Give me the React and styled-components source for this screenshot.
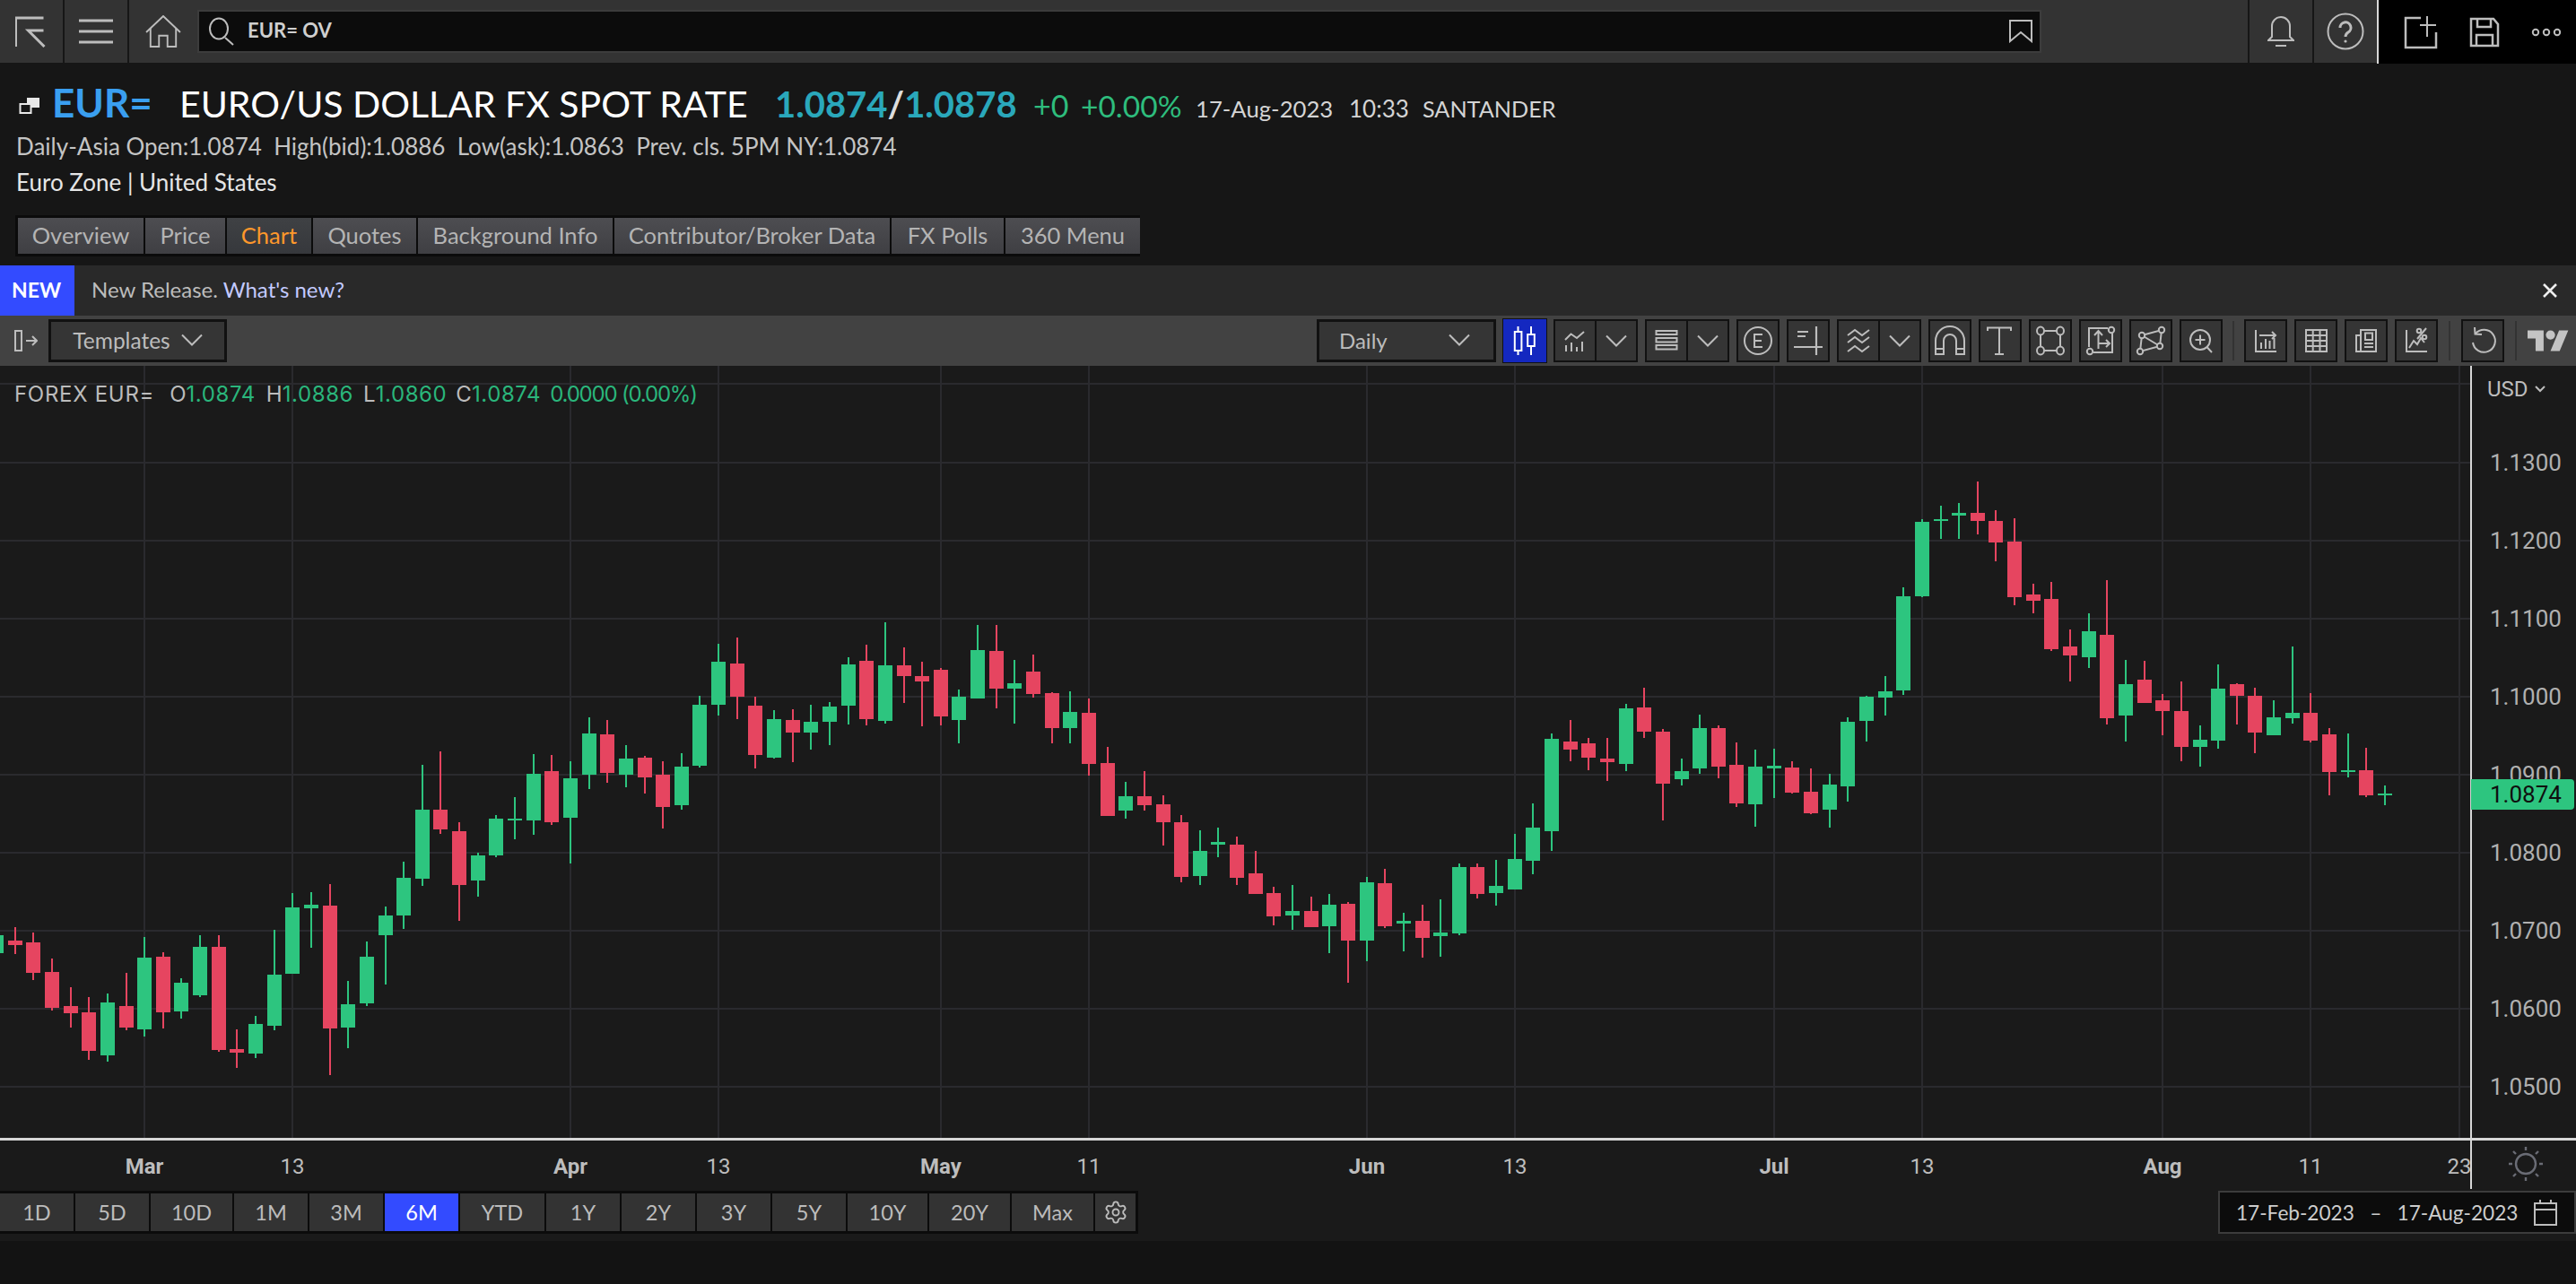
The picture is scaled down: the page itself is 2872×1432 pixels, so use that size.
import React from "react";
import styled, { createGlobalStyle } from "styled-components";
import { Settings } from "lucide-react";

const UI = `"Lato", "Open Sans", "Liberation Sans", sans-serif`;
const AXIS = `"Roboto", "Inter", "Liberation Sans", sans-serif`;

const Global = createGlobalStyle`
  html, body { margin: 0; padding: 0; background: #131313; width: 2872px; height: 1432px; overflow: hidden; }
  * { box-sizing: border-box; }
`;

const Page = styled.div`
  width: 2872px; height: 1432px; display: flex; flex-direction: column; overflow: hidden;
  background: #161616; font-family: ${UI}; color: #c8c8c8;
`;

/* ---------- top bar ---------- */
const TopBar = styled.header`
  height: 71px; flex: none; display: flex; background: #161616;
`;
const TopLeft = styled.div`
  flex: 1; display: flex; height: 70px; background: #333;
`;
const NavCell = styled.div`
  width: ${p => p.$w}px; height: 70px; flex: none; display: flex; align-items: center; justify-content: center;
  ${p => p.$divider === "right" ? "border-right: 2px solid #161616;" : ""}
  ${p => p.$divider === "left" ? "border-left: 2px solid #161616;" : ""}
`;
const SearchBox = styled.div`
  width: 2056px; height: 48px; margin-top: 11px; display: flex; align-items: center; flex: none;
  background: #0c0c0c; border: 2px solid #3c3c3c; padding: 0 8px 0 10px;
`;
const SearchText = styled.span`
  font-size: 22px; font-weight: 700; color: #cfcfcf; margin-left: 14px; flex: 1; padding-bottom: 3px;
`;
const Push = styled.div` flex: 1; `;
const BlackTools = styled.div`
  width: 222px; height: 71px; flex: none; background: #000; border-left: 2px solid #d8d8d8;
  display: flex; align-items: center; padding-left: 28px; gap: 35px;
`;

/* ---------- instrument header ---------- */
const Header = styled.section`
  flex: none; height: 225px; padding: 17px 18px 0; background: #161616;
`;
const TitleRow = styled.div`
  height: 50px; display: flex; align-items: baseline; white-space: nowrap; position: relative; padding-left: 40px;
`;
const StackIcon = styled.svg`
  position: absolute; left: 3px; top: 20px;
`;
const Ric = styled.span`
  font-size: 44px; font-weight: 700; color: #3a9ff0; width: 142px; flex: none;
`;
const TitleName = styled.span`
  font-size: 41px; color: #fff; width: 664px; flex: none;
`;
const Quote = styled.span`
  font-size: 40px; font-weight: 700; color: #2aa8bb; width: 288px; flex: none;
`;
const Slash = styled.span` color: #ddd; `;
const Change = styled.span`
  font-size: ${p => p.$size}px; color: #2ebd7d; width: ${p => p.$w}px; flex: none;
`;
const Stamp = styled.span`
  font-size: ${p => p.$size}px; color: #d4d4d4; width: ${p => p.$w}px; flex: none;
`;
const MetaRow = styled.div`
  height: 30px; margin-top: 10px; font-size: 26px; line-height: 30px; color: ${p => p.$bright ? "#e6e6e6" : "#c4c4c4"}; white-space: pre;
`;
const Tabs = styled.nav`
  display: flex; width: fit-content; margin: 22px 0 0 -1px; height: 46px; padding: 3px 0 3px 3px; background: #0b0b0b; gap: 2px;
`;
const Tab = styled.div`
  width: ${p => p.$w}px; display: flex; align-items: center; justify-content: center; padding-bottom: 2px;
  font-size: 25.5px; white-space: nowrap;
  color: ${p => p.$active ? "#ff982b" : "#b4b4b4"};
  background: ${p => p.$active ? "linear-gradient(#3f4144,#36383c)" : "linear-gradient(#4d4d51,#3f3f43)"};
`;

/* ---------- release bar ---------- */
const ReleaseBar = styled.div`
  flex: none; height: 56px; display: flex; align-items: center; background: #292929; font-size: 24px;
`;
const NewBadge = styled.div`
  width: 83px; height: 100%; flex: none; display: flex; align-items: center; justify-content: center;
  background: #334bff; color: #fff; font-weight: 700; font-size: 23px; padding: 0 2px 2px 0;
`;
const ReleaseText = styled.span` margin-left: 19px; color: #bcbcbc; padding-bottom: 3px; `;
const ReleaseLink = styled.span` color: #c3caff; `;
const CloseSlot = styled.div` margin-right: 20px; display: flex; `;

/* ---------- chart toolbar ---------- */
const Toolbar = styled.div`
  flex: none; height: 56px; display: flex; align-items: center; background: #424242; padding: 0 8px 0 16px;
`;
const TemplatesBtn = styled.div`
  width: 199px; height: 48px; margin-left: 12px; display: flex; align-items: center; justify-content: center; gap: 12px;
  background: #353535; border: 3px solid #111; font-size: 24.5px; color: #bcbcbc; padding-bottom: 2px;
`;
const ToolGroup = styled.div`
  margin-left: auto; display: flex; align-items: center; gap: 8px;
`;
const IntervalBtn = styled.div`
  width: 200px; height: 48px; display: flex; align-items: center; justify-content: space-between; padding: 0 26px 2px 22px;
  background: #353535; border: 3px solid #111; font-size: 24px; color: #bcbcbc;
`;
const ToolBtn = styled.div`
  width: 48px; height: 48px; flex: none; display: flex; align-items: center; justify-content: center;
  background: ${p => p.$active ? "#1428c0" : "#353535"}; border: 2px solid ${p => p.$active ? "#1428c0" : "#111"};
  ${p => p.$active ? "box-shadow: 0 0 0 1px #111;" : ""}
`;
const SplitBtn = styled.div`
  width: 94px; height: 48px; flex: none; display: flex; background: #353535; border: 2px solid #111;
`;
const SplitCell = styled.div`
  flex: 1; display: flex; align-items: center; justify-content: center;
  ${p => p.$first ? "border-right: 2px solid #111;" : ""}
`;
const ToolSep = styled.div`
  width: 2px; height: 44px; background: #333; margin: 0 ${p => p.$m}px;
`;

/* ---------- chart ---------- */
const ChartPanel = styled.main`
  flex: none; height: 976px; background: #1a1a1a; position: relative; display: flex; flex-direction: column;
`;
const ChartSvg = styled.svg`
  display: block; flex: none;
`;
const Legend = styled.div`
  position: absolute; left: 16px; top: 18px; display: flex; font-family: "Inter", ${AXIS}; font-size: 24px; line-height: 28px; color: #bcbcbc; white-space: pre;
`;
const LegendName = styled.span` letter-spacing: 0.7px; `;
const LegendItem = styled.span` margin-left: ${p => p.$gap || 0}px; `;
const Up = styled.span` color: #2ab67c; letter-spacing: ${p => p.$track || 0}px; `;
const AxisLabel = styled.text`
  font-family: ${AXIS}; font-size: 24px; fill: #bdbdbd; font-weight: ${p => p.$bold ? 700 : 400};
  text-anchor: ${p => p.$anchor || "middle"};
`;
const TagLabel = styled.text`
  font-family: ${AXIS}; font-size: 26px; fill: #0f0f0f;
`;
const PriceLabel = styled.text`
  font-family: ${AXIS}; font-size: 26px; fill: #b0b0b0;
`;

const RangeRow = styled.div`
  flex: 1; display: flex; justify-content: space-between; align-items: flex-start; padding-top: 2px;
`;
const RangeBar = styled.div`
  display: flex; height: 48px; padding: 3px 3px 3px 0; gap: 2px; background: #0b0b0b;
`;
const RangeBtn = styled.div`
  width: ${p => p.$w}px; display: flex; align-items: center; justify-content: center; font-size: 23.5px; padding-bottom: 1px;
  color: ${p => p.$active ? "#fff" : "#bcbcbc"}; background: ${p => p.$active ? "#334bff" : "#333"};
`;
const DateBox = styled.div`
  width: 399px; height: 48px; display: flex; align-items: center; padding-left: 18px; font-size: 22.6px; white-space: pre;
  background: #0c0c0c; border: 2px solid #3c3c3c; color: #cdcdcd; gap: 18px;
`;
const Footer = styled.div` flex: 1; background: #131313; `;

/* ---------- icons ---------- */
const S = "#bdbdbd";
const Ic = ({ w = 44, h = 44, vb, sw = 2, c = S, children }) => (
  <svg width={w} height={h} viewBox={vb || `0 0 ${w} ${h}`} fill="none" stroke={c} strokeWidth={sw}>{children}</svg>
);
const Chevron = ({ w = 24, c = S }) => (
  <svg width={w} height={14} viewBox="0 0 24 14" fill="none" stroke={c} strokeWidth="2"><path d="M1 1.5 L12 12.5 L23 1.5" /></svg>
);

const LogoMark = () => <Ic w={36} h={36} vb="1.5 0 36 36" sw={3}><path d="M2 35 V3 H33" /><path d="M33 17 H16 L34 35" /></Ic>;
const MenuIcon = () => <Ic w={40} h={30} sw={3}><path d="M1 3H39M1 15H39M1 27H39" /></Ic>;
const HomeIcon = () => <Ic w={40} h={36} vb="0 0 42 38" sw={2}><path d="M1 20 L21 1 L41 20" /><path d="M6 15 V37 H16 V24 H26 V37 H36 V15" /></Ic>;
const SearchIcon = () => <Ic w={30} h={32} sw={2}><ellipse cx="12" cy="13" rx="10" ry="11.5" /><path d="M19 23 L28 31" /></Ic>;
const BookmarkIcon = () => <Ic w={26} h={26}><path d="M1 1 H25 V24 L13 14 L1 24 Z" /></Ic>;
const BellIcon = () => <Ic w={30} h={34}><path d="M5 23 V11 a10 10 0 0 1 20 0 V23 L29 27 H1 Z" /><path d="M9 33 H21" /></Ic>;
const HelpIcon = () => (
  <Ic w={42} h={42} sw={2}>
    <circle cx="21" cy="21" r="19.5" />
    <path d="M15 17 a6 6 0 1 1 9 5 q-3 2 -3 5" strokeWidth="3" />
    <circle cx="21" cy="32" r="1.6" fill={S} stroke="none" />
  </Ic>
);
const NewPageIcon = () => <Ic w={38} h={38} sw={2.5}><path d="M19 3 H2 V36 H36 V19" /><path d="M26 1 V24 M18 11 H36" strokeWidth="2" /></Ic>;
const SaveIcon = () => <Ic w={34} h={34} sw={2.5}><path d="M2 2 H27 L32 8 V32 H2 Z" /><path d="M9 2 V11 H24 V2" /><path d="M8 32 V20 H26 V32" /></Ic>;
const DotsIcon = () => (
  <Ic w={34} h={12} sw={2}><circle cx="5" cy="6" r="3.2" /><circle cx="17" cy="6" r="3.2" /><circle cx="29" cy="6" r="3.2" /></Ic>
);
const PanelIcon = () => <Ic w={26} h={24} sw={2}><rect x="1" y="1" width="7" height="22" /><path d="M13 12 H25 M20 7 L25 12 L20 17" /></Ic>;
const CloseIcon = () => <Ic w={18} h={18} sw={2.6} c="#eee"><path d="M2 2 L16 16 M16 2 L2 16" /></Ic>;

const T = ({ children, c, sw }) => <Ic w={44} h={44} vb="2 2 44 44" c={c} sw={sw}>{children}</Ic>;
const CandleIcon = () => (
  <T c="#fff"><path d="M16.5 8 V40 M31 8 V40" /><rect x="12.8" y="14" width="7.6" height="21" fill="#1428c0" /><rect x="27.2" y="17" width="7.6" height="13" fill="#1428c0" /></T>
);
const StudyIcon = () => (
  <T><path d="M14 36V29M20 36V26M26 36V31M32 36V25" /><path d="M13 23 L19.5 16.5 L26 21 L34 14" /></T>
);
const LayersIcon = () => (
  <T><rect x="12.5" y="13" width="23" height="4" /><rect x="12.5" y="21" width="23" height="4.5" /><rect x="12.5" y="29" width="23" height="4.5" /></T>
);
const EventIcon = () => (
  <T><circle cx="24" cy="24" r="15" /><path d="M29 17 H20 V31 H29 M20 24 H28" /></T>
);
const LineToolIcon = () => (
  <T sw={2.2}><path d="M33 8 V40 M8 31 H40 M12 14 H24 M12 19 H21" /></T>
);
const WavesIcon = () => (
  <T><path d="M12 18 L20 12 L28 18 L36 12 M12 26 L20 20 L28 26 L36 20 M12 36 L20 30 L28 36 L36 30" /></T>
);
const MagnetIcon = () => (
  <T><path d="M8 39 V24 a16 16 0 0 1 32 0 V39 H31 V24 a7 7 0 0 0 -14 0 V39 Z M8 33 H17 M31 33 H40" /></T>
);
const TextToolIcon = () => (
  <T><path d="M10 13 V9.5 H36 V13 M23 9.5 V39 M18 39 H28" /></T>
);
const RectToolIcon = () => (
  <T>
    <path d="M17 13 H31 M35 17 V30 M31 35 H17 M13 30 V17" />
    <ellipse cx="13" cy="13" rx="4" ry="4.5" /><ellipse cx="35" cy="13" rx="4" ry="4.5" /><ellipse cx="13" cy="35" rx="4" ry="4.5" /><ellipse cx="35" cy="35" rx="4" ry="4.5" />
  </T>
);
const TransformIcon = () => (
  <T>
    <path d="M32 10 H11 V31 M16 37 H37 V16" />
    <circle cx="36" cy="12" r="3.2" fill="#353535" /><circle cx="12" cy="36" r="3.2" fill="#353535" />
    <path d="M21.5 33 V13 M17 18 L21.5 13 L26 18 M21.5 27 H34 M30 23 L34 27 L30 31" />
  </T>
);
const PolyIcon = () => (
  <T>
    <path d="M14 18 L36 12 L34 30 L12 36 Z M14 18 L34 30" />
    <circle cx="14" cy="18" r="3.2" fill="#353535" /><circle cx="36" cy="12" r="3.2" fill="#353535" />
    <circle cx="34" cy="30" r="3.2" fill="#353535" /><circle cx="12" cy="36" r="3.2" fill="#353535" />
  </T>
);
const ZoomIcon = () => (
  <T><circle cx="23" cy="23" r="11" /><path d="M23 17.5 V28.5 M17.5 23 H28.5 M30.5 31 L36 37" /></T>
);
const ChartCompareIcon = () => (
  <T><path d="M13 12 V36 H36 M19 33 V26 M24 33 V22 M28.5 33 V24 M33.5 33 V21 M17 18 H35 M31 14 L35 18 L31 22" /></T>
);
const TableIcon = () => (
  <T><rect x="13" y="12" width="23" height="24" /><path d="M13 18 H36 M13 24 H36 M13 30 H36 M20.7 12 V36 M28.5 12 V36" /></T>
);
const NewsIcon = () => (
  <T><path d="M18 12 H35 V36 H18 Z M18 18 H13 V36 H18" /><rect x="23" y="15.5" width="8" height="7.5" /><path d="M22 27 H32 M22 31 H32" /></T>
);
const PercentIcon = () => (
  <T>
    <path d="M13 12 V36 H36 M16 32 L21 24 L25 28 L29 21 L33 26" />
    <path d="M35 10 L25 22" /><circle cx="27" cy="13" r="2.3" /><circle cx="33" cy="20" r="2.3" />
  </T>
);
const UndoIcon = () => (
  <T><path d="M16 16 a12.5 12.5 0 1 1 -3 10" /><path d="M15 9 L15.5 16.5 L23 17" /></T>
);
const TvLogo = () => (
  <svg width="46" height="26" viewBox="0 3 36 20" fill="#c4c4c4">
    <path d="M14 22H7V11H0V4h14v18zM28 22h-8l7.5-18h8L28 22z" /><circle cx="20" cy="8" r="4" />
  </svg>
);
const StackGlyph = () => (
  <StackIcon width="24" height="20" viewBox="0 0 24 20">
    <rect x="9" y="1" width="14" height="11" fill="#e8e8e8" />
    <rect x="1.5" y="8" width="12" height="10" fill="#161616" stroke="#e8e8e8" strokeWidth="2" />
  </StackIcon>
);
const CalendarIcon = () => (
  <Ic w={26} h={30}><rect x="1" y="5" width="24" height="24" /><path d="M1 12 H25 M7 1 V5 M19 1 V5" /></Ic>
);

/* ---------- chart data: [x, wickTop, bodyTop, bodyBottom, wickBottom, up] ---------- */
const sets = [
  { ox: 0, oy: 640, sx: 2.24, sy: 2.613, d: [
    [-9,1030,1053,1105,1120,1],[38,1030,1069,1082,1108,0],[83,1045,1074,1163,1184,0],[130,1121,1160,1265,1273,0],[177,1205,1260,1281,1322,0],
    [222,1233,1278,1390,1416,0],[269,1223,1249,1403,1422,1],[316,1163,1260,1322,1330,0],[361,1058,1119,1328,1348,1],[408,1103,1116,1278,1325,0],
    [452,1179,1192,1275,1296,1],[499,1053,1087,1228,1233,1],[546,1053,1087,1388,1393,0],[591,1328,1385,1396,1440,0],[638,1288,1312,1398,1411,1],
    [685,1037,1168,1317,1330,1],[730,930,972,1166,1166,1],[777,928,964,975,1090,1],[824,904,967,1325,1461,0],[869,1186,1254,1322,1382,1],
    [916,1071,1116,1252,1260,1],[963,970,996,1053,1197,1],[1008,839,886,996,1035,1],[1055,557,687,889,909,1],[1100,517,687,745,758,0],
    [1147,724,750,907,1011,0],[1194,813,821,894,941,1],[1239,703,713,821,826,1],[1286,651,713,719,774,1],[1333,525,583,719,760,1],
    [1378,528,575,724,732,0],[1425,546,596,711,844,1],[1472,418,465,585,627,1],[1516,426,468,580,609,0],[1564,499,538,585,622,1],
  ]},
  { ox: 700, oy: 640, sx: 2.24, sy: 2.613, d: [
    [42,531,536,593,640,0],[87,546,585,679,742,0],[134,523,562,674,687,1],[179,355,382,559,564,1],[226,204,256,382,413,1],
    [273,186,261,358,423,0],[318,358,384,528,567,0],[365,397,423,536,538,1],[412,395,426,463,549,0],[457,382,431,463,512,1],
    [504,374,387,431,499,1],[551,243,264,384,439,1],[596,206,253,423,442,0],[643,141,267,429,436,1],[690,214,267,298,376,0],
    [735,256,298,314,444,0],[782,274,280,416,442,0],[827,337,358,426,494,1],[874,149,222,363,363,1],[921,149,225,335,392,0],
    [966,251,319,335,436,1],[1012,235,285,350,361,0],[1059,345,348,449,494,0],[1104,342,402,449,494,1],[1151,363,405,554,588,0],
    [1198,504,551,706,706,0],[1243,606,648,690,713,1],[1290,575,648,674,690,0],[1337,645,672,724,792,0],[1382,703,724,883,899,0],
    [1429,747,808,881,907,1],[1474,740,781,789,826,1],[1521,766,789,886,907,0],
  ]},
  { ox: 1400, oy: 640, sx: 2.24, sy: 2.613, d: [
    [0,808,873,933,933,0],[45,912,930,998,1024,0],[92,907,983,996,1037,1],[139,941,983,1030,1030,0],[184,933,964,1027,1105,1],
    [231,956,962,1069,1192,0],[278,883,899,1069,1129,1],[323,860,902,1027,1032,0],[370,988,1011,1019,1100,1],[417,964,1011,1061,1119,0],
    [462,949,1045,1056,1116,1],[509,844,855,1048,1053,1],[553,844,855,933,946,0],[600,834,909,930,967,1],[647,758,831,920,920,1],
    [692,669,740,836,875,1],[739,465,481,750,808,1],[786,426,489,512,546,0],[831,478,494,536,572,0],[878,478,538,549,604,0],
    [925,379,392,554,575,1],[970,332,389,460,478,0],[1017,452,460,612,719,0],[1064,538,575,598,617,1],[1109,410,449,567,583,1],
    [1156,442,449,562,596,0],[1201,491,557,669,679,0],[1248,512,562,672,737,1],[1295,510,559,567,653,1],[1340,546,564,638,640,0],
    [1387,567,635,698,700,0],[1434,583,614,687,740,1],
  ]},
  { ox: 2000, oy: 500, sx: 1.798, sy: 3, d: [
    [108,900,915,1131,1182,1],[145,828,831,912,981,1],[183,762,813,834,894,1],[219,465,495,810,825,1],[257,237,246,495,498,1],
    [295,192,237,243,303,1],[331,183,216,224,303,1],[368,111,216,243,288,0],[404,207,243,315,378,0],[442,234,312,498,525,0],
    [480,453,489,510,552,0],[516,447,504,672,678,0],[553,606,663,693,780,0],[591,552,612,699,735,1],[627,441,624,903,924,0],
    [665,708,789,894,981,1],[703,711,774,852,852,0],[739,822,843,879,960,0],[776,780,879,999,1047,0],[814,927,975,999,1065,1],
    [850,723,804,978,1005,1],[888,786,789,828,924,0],[924,801,828,951,1020,0],[962,843,900,960,960,1],[1000,663,885,903,921,1],
    [1036,819,885,978,984,0],[1073,936,957,1083,1161,0],[1111,954,1077,1083,1101,1],[1147,1002,1077,1161,1167,0],[1185,1128,1155,1161,1194,1],
  ]},
];
const CHART_TOP = 408;
const candles = sets.flatMap(({ ox, oy, sx, sy, d }) =>
  d.map(([x, wt, bt, bb, wb, up]) => ({
    x: Math.round(ox + x / sx),
    wt: oy + wt / sy - CHART_TOP,
    bt: oy + bt / sy - CHART_TOP,
    bb: oy + bb / sy - CHART_TOP,
    wb: oy + wb / sy - CHART_TOP,
    up,
  }))
);
const prices = [
  ["1.1300", 108], ["1.1200", 195], ["1.1100", 281.5], ["1.1000", 368.5], ["1.0900", 455.5],
  ["1.0800", 542.5], ["1.0700", 629.5], ["1.0600", 716.5], ["1.0500", 803.5],
];
const ticks = [
  [161, "Mar", 1], [326, "13"], [636, "Apr", 1], [801, "13"], [1049, "May", 1], [1214, "11"],
  [1524, "Jun", 1], [1689, "13"], [1978, "Jul", 1], [2143, "13"], [2411, "Aug", 1], [2576, "11"], [2742, "23"],
];
const GRID = "#2a2a2e";
const UP = "#2dc57f";
const DOWN = "#e64560";

const Chart = () => (
  <ChartSvg width="2872" height="918" viewBox="0 0 2872 918">
    <g shapeRendering="crispEdges">
      <rect x="0" y="19" width="2755" height="2" fill={GRID} />
      {prices.map(([l, y]) => <rect key={l} x="0" y={y - 1} width="2755" height="2" fill={GRID} />)}
      {ticks.map(([x]) => <rect key={x} x={x - 1} y="0" width="2" height="862" fill={GRID} />)}
      {candles.map((c, i) => (
        <g key={i} fill={c.up ? UP : DOWN}>
          <rect x={c.x - 1} y={c.wt} width="2" height={c.wb - c.wt} />
          <rect x={c.x - 8} y={c.bt} width="16" height={Math.max(c.bb - c.bt, 2)} />
        </g>
      ))}
      <rect x="0" y="861" width="2872" height="3" fill="#d6d6d6" />
    </g>
    {ticks.map(([x, l, b]) => <AxisLabel key={x} x={x} y="901" $bold={b}>{l}</AxisLabel>)}
    <rect x="2754" y="0" width="2" height="918" fill="#d6d6d6" />
    {prices.map(([l, y]) => <PriceLabel key={l} x="2776" y={y + 9}>{l}</PriceLabel>)}
    <path d="M2755 461 H2866 a4 4 0 0 1 4 4 V491 a4 4 0 0 1 -4 4 H2755 Z" fill={UP} />
    <TagLabel x="2776" y="487">1.0874</TagLabel>
    <AxisLabel x="2773" y="34" $anchor="start">USD</AxisLabel>
    <path d="M2827 23 L2832 28 L2837 23" fill="none" stroke="#bdbdbd" strokeWidth="2" />
    <g fill="none" stroke="#6a6c75" strokeWidth="2.4" transform="translate(2816 890)">
      <circle r="11" />
      <path d="M0 -15 V-19 M0 15 V19 M-15 0 H-19 M15 0 H19 M-11 -11 L-14 -14 M11 -11 L14 -14 M-11 11 L-14 14 M11 11 L14 14" />
    </g>
  </ChartSvg>
);

const tabs = [
  ["Overview", 140], ["Price", 89], ["Chart", 94], ["Quotes", 115], ["Background Info", 217],
  ["Contributor/Broker Data", 307], ["FX Polls", 125], ["360 Menu", 150],
];
const ranges = [
  ["1D", 82], ["5D", 82], ["10D", 91], ["1M", 82], ["3M", 82], ["6M", 82, 1], ["YTD", 94], ["1Y", 82], ["2Y", 82],
  ["3Y", 82], ["5Y", 82], ["10Y", 89], ["20Y", 90], ["Max", 91],
];
const legend = [
  ["O", "1.0874", 17], ["H", "1.0886", 12], ["L", "1.0860", 11], ["C", "1.0874", 10],
];

export default function App() {
  return (
    <Page>
      <Global />
      <TopBar>
        <TopLeft>
          <NavCell $w={72} $divider="right"><LogoMark /></NavCell>
          <NavCell $w={72} $divider="right"><MenuIcon /></NavCell>
          <NavCell $w={76}><HomeIcon /></NavCell>
          <SearchBox>
            <SearchIcon />
            <SearchText>EUR= OV</SearchText>
            <BookmarkIcon />
          </SearchBox>
          <Push />
          <NavCell $w={72} $divider="left"><BellIcon /></NavCell>
          <NavCell $w={72} $divider="left"><HelpIcon /></NavCell>
        </TopLeft>
        <BlackTools><NewPageIcon /><SaveIcon /><DotsIcon /></BlackTools>
      </TopBar>

      <Header>
        <TitleRow>
          <StackGlyph />
          <Ric>EUR=</Ric>
          <TitleName>EURO/US DOLLAR FX SPOT RATE</TitleName>
          <Quote>1.0874<Slash>/</Slash>1.0878</Quote>
          <Change $size={34} $w={53}>+0</Change>
          <Change $size={33.5} $w={128}>+0.00%</Change>
          <Stamp $size={25.7} $w={171}>17-Aug-2023</Stamp>
          <Stamp $size={26} $w={82}>10:33</Stamp>
          <Stamp $size={25.2} $w={160}>SANTANDER</Stamp>
        </TitleRow>
        <MetaRow>{"Daily-Asia Open:1.0874  High(bid):1.0886  Low(ask):1.0863  Prev. cls. 5PM NY:1.0874"}</MetaRow>
        <MetaRow $bright>Euro Zone | United States</MetaRow>
        <Tabs>
          {tabs.map(([l, w]) => <Tab key={l} $w={w} $active={l === "Chart"}>{l}</Tab>)}
        </Tabs>
      </Header>

      <ReleaseBar>
        <NewBadge>NEW</NewBadge>
        <ReleaseText>New Release. <ReleaseLink>What's new?</ReleaseLink></ReleaseText>
        <Push />
        <CloseSlot><CloseIcon /></CloseSlot>
      </ReleaseBar>

      <Toolbar>
        <PanelIcon />
        <TemplatesBtn>Templates <Chevron /></TemplatesBtn>
        <ToolGroup>
          <IntervalBtn>Daily <Chevron /></IntervalBtn>
          <ToolBtn $active><CandleIcon /></ToolBtn>
          <SplitBtn><SplitCell $first><StudyIcon /></SplitCell><SplitCell><Chevron /></SplitCell></SplitBtn>
          <SplitBtn><SplitCell $first><LayersIcon /></SplitCell><SplitCell><Chevron /></SplitCell></SplitBtn>
          <ToolBtn><EventIcon /></ToolBtn>
          <ToolBtn><LineToolIcon /></ToolBtn>
          <SplitBtn><SplitCell $first><WavesIcon /></SplitCell><SplitCell><Chevron /></SplitCell></SplitBtn>
          <ToolBtn><MagnetIcon /></ToolBtn>
          <ToolBtn><TextToolIcon /></ToolBtn>
          <ToolBtn><RectToolIcon /></ToolBtn>
          <ToolBtn><TransformIcon /></ToolBtn>
          <ToolBtn><PolyIcon /></ToolBtn>
          <ToolBtn><ZoomIcon /></ToolBtn>
          <ToolSep $m={3} />
          <ToolBtn><ChartCompareIcon /></ToolBtn>
          <ToolBtn><TableIcon /></ToolBtn>
          <ToolBtn><NewsIcon /></ToolBtn>
          <ToolBtn><PercentIcon /></ToolBtn>
          <ToolSep $m={4} />
          <ToolBtn><UndoIcon /></ToolBtn>
          <ToolSep $m={4} />
          <TvLogo />
        </ToolGroup>
      </Toolbar>

      <ChartPanel>
        <Chart />
        <Legend>
          <LegendName>FOREX EUR=</LegendName>
          {legend.map(([k, v, g]) => <LegendItem key={k} $gap={g}>{k}<Up $track={0.6}>{v}</Up></LegendItem>)}
          <LegendItem $gap={10}><Up $track={-1.2}>0.0000 (0.00%)</Up></LegendItem>
        </Legend>
        <RangeRow>
          <RangeBar>
            {ranges.map(([l, w, a]) => <RangeBtn key={l} $w={w} $active={a}>{l}</RangeBtn>)}
            <RangeBtn $w={45}><Settings size={28} strokeWidth={1.6} /></RangeBtn>
          </RangeBar>
          <DateBox>
            <span>{"17-Feb-2023   –   17-Aug-2023"}</span>
            <CalendarIcon />
          </DateBox>
        </RangeRow>
      </ChartPanel>
      <Footer />
    </Page>
  );
}
